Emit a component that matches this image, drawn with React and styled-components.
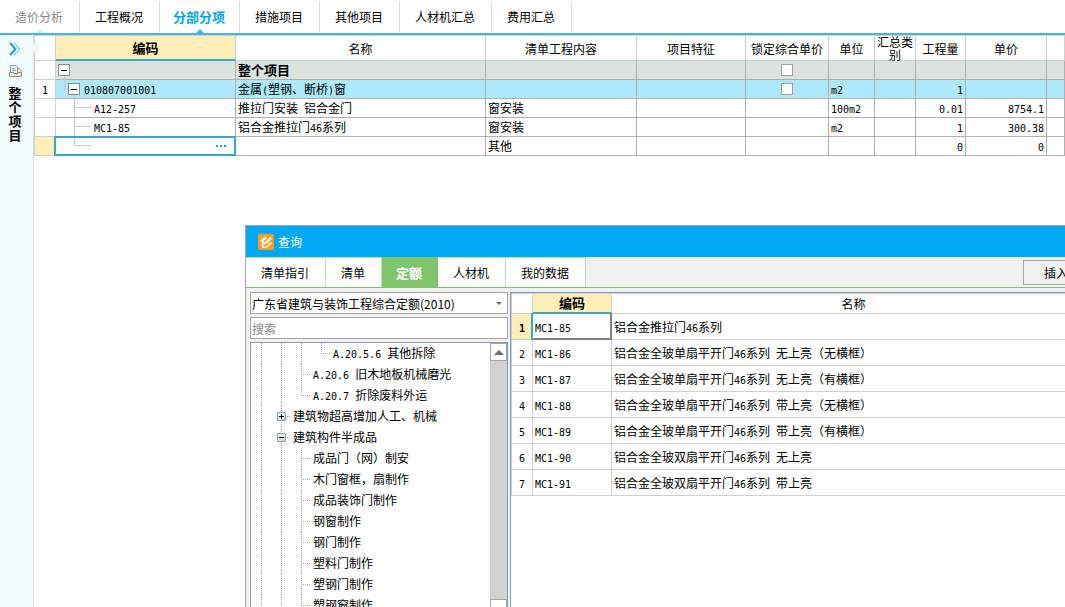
import React from "react";
import styled, { createGlobalStyle, css } from "styled-components";

const tabs = ["造价分析", "工程概况", "分部分项", "措施项目", "其他项目", "人材机汇总", "费用汇总"];

const columns = [
  { label: "编码", width: 180, current: true },
  { label: "名称", width: 250 },
  { label: "清单工程内容", width: 151 },
  { label: "项目特征", width: 109 },
  { label: "锁定综合单价", width: 83 },
  { label: "单位", width: 46 },
  { label: "汇总类别", width: 41 },
  { label: "工程量", width: 50 },
  { label: "单价", width: 81 },
  { label: "" },
];

const items = [
  { kind: "root", name: "整个项目", lock: true },
  { kind: "item", no: "1", code: "010807001001", name: "金属(塑钢、断桥)窗", lock: true, unit: "m2", qty: "1" },
  { kind: "leaf", code: "A12-257", name: "推拉门安装 铝合金门", work: "窗安装", unit: "100m2", qty: "0.01", price: "8754.1" },
  { kind: "leaf", code: "MC1-85", name: "铝合金推拉门46系列", work: "窗安装", unit: "m2", qty: "1", price: "300.38" },
  { kind: "new", work: "其他", qty: "0", price: "0" },
];

const dialogTabs = ["清单指引", "清单", "定额", "人材机", "我的数据"];

const treeRows = [
  { guides: ["line", "line", "line", "end"], label: "A.20.5.6 其他拆除" },
  { guides: ["line", "line", "tee"], label: "A.20.6 旧木地板机械磨光" },
  { guides: ["line", "line", "end"], label: "A.20.7 折除废料外运" },
  { guides: ["line", "tee"], toggle: "plus", label: "建筑物超高增加人工、机械" },
  { guides: ["line", "tee"], toggle: "minus", label: "建筑构件半成品" },
  { guides: ["line", "line", "tee"], label: "成品门（网）制安" },
  { guides: ["line", "line", "tee"], label: "木门窗框，扇制作" },
  { guides: ["line", "line", "tee"], label: "成品装饰门制作" },
  { guides: ["line", "line", "tee"], label: "钢窗制作" },
  { guides: ["line", "line", "tee"], label: "钢门制作" },
  { guides: ["line", "line", "tee"], label: "塑料门制作" },
  { guides: ["line", "line", "tee"], label: "塑钢门制作" },
  { guides: ["line", "line", "tee"], label: "塑钢窗制作" },
];

const quotas = [
  ["MC1-85", "铝合金推拉门46系列"],
  ["MC1-86", "铝合金全玻单扇平开门46系列 无上亮（无横框）"],
  ["MC1-87", "铝合金全玻单扇平开门46系列 无上亮（有横框）"],
  ["MC1-88", "铝合金全玻单扇平开门46系列 带上亮（无横框）"],
  ["MC1-89", "铝合金全玻单扇平开门46系列 带上亮（有横框）"],
  ["MC1-90", "铝合金全玻双扇平开门46系列 无上亮"],
  ["MC1-91", "铝合金全玻双扇平开门46系列 带上亮"],
];

// Latin runs use a half-width mono face beside the full-width characters
const Text = ({ children = "" }) =>
  children
    .split(/([ -~]+)/)
    .filter(Boolean)
    .map((part, i) => (/^[ -~]/.test(part) ? <Latin key={i}>{part}</Latin> : part));

const ItemCode = ({ item }) => {
  if (item.kind === "root") {
    return (
      <CodeCell>
        <Toggle $level={0} aria-label="折叠整个项目" />
      </CodeCell>
    );
  }
  if (item.kind === "item") {
    return (
      <CodeCell>
        <Branch $short $last />
        <Toggle $level={1} aria-label="折叠清单" />
        <Code $gap={4}><Text>{item.code}</Text></Code>
      </CodeCell>
    );
  }
  return (
    <CodeCell>
      <Branch $last={item.kind === "new"} />
      <Code $gap={3}><Text>{item.code}</Text></Code>
      {item.kind === "new" && (
        <MoreButton aria-label="选择编码">
          <i /><i /><i />
        </MoreButton>
      )}
    </CodeCell>
  );
};

const App = () => {
  return (
    <Page>
      <GlobalStyle />
      <TabBar>
        {tabs.map((tab, i) => (
          <Tab key={tab} $active={i === 2} $muted={i === 0}>{tab}</Tab>
        ))}
      </TabBar>

      <Workspace>
        <Sidebar>
          <IconButton aria-label="展开">
            <svg width="12" height="14" viewBox="0 0 12 14" fill="none" strokeWidth="1.5">
              <path d="M5 1l5.5 6L5 13" stroke="#8fd3ee" />
              <path d="M1 1l5.5 6L1 13" stroke="#1f9fd0" strokeWidth="2" />
            </svg>
          </IconButton>
          <IconButton aria-label="整个项目">
            <svg width="13" height="12" viewBox="0 0 13 12">
              <path d="M7.5 3.5h3l1.500 1.500v4h-4.500z" fill="#fff" stroke="#8c959a" />
              <path d="M1.500 8.500v-8h5l2 2v6z" fill="#fff" stroke="#8c959a" />
              <path d="M3 3.500h3M3 5.500h4" stroke="#3aa6d0" />
              <path d="M.5 7.500h4l1 1.500h3V7.500h4v4H.5z" fill="#fff3c4" stroke="#8c8c84" />
            </svg>
          </IconButton>
          <SideTitle>整个项目</SideTitle>
          <Notch width="6" height="12" viewBox="0 0 6 12">
            <path d="M0 0l5 6-5 6z" fill="#f0fcff" />
            <path d="M0 0l5 6-5 6" fill="none" stroke="#d3dfe2" />
          </Notch>
        </Sidebar>

        <Main>
          <ItemTable>
            <colgroup>
              <Col $width={21} />
              {columns.map((col, i) => <Col key={i} $width={col.width} />)}
            </colgroup>
            <thead>
              <tr>
                <HeadCell />
                {columns.map((col, i) => (
                  <HeadCell key={i} $current={col.current}>
                    <HeadLabel>{col.label}</HeadLabel>
                  </HeadCell>
                ))}
              </tr>
            </thead>
            <tbody>
              {items.map((item, i) => (
                <ItemRow key={i} $kind={item.kind}>
                  <IndexCell $current={item.kind === "new"}><Text>{item.no}</Text></IndexCell>
                  <Cell $flush $focused={item.kind === "new"}><ItemCode item={item} /></Cell>
                  <Cell $bold={item.kind === "root"}><Text>{item.name}</Text></Cell>
                  <Cell>{item.work}</Cell>
                  <Cell />
                  <Cell $align="center">
                    {item.lock && <Check type="checkbox" aria-label="锁定综合单价" />}
                  </Cell>
                  <Cell><Text>{item.unit}</Text></Cell>
                  <Cell />
                  <Cell $align="right"><Text>{item.qty}</Text></Cell>
                  <Cell $align="right"><Text>{item.price}</Text></Cell>
                  <Cell />
                </ItemRow>
              ))}
            </tbody>
          </ItemTable>
        </Main>
      </Workspace>

      <Dialog role="dialog" aria-label="查询">
        <TitleBar>
          <svg width="16" height="16" viewBox="0 0 16 16">
            <rect width="16" height="16" rx="2" fill="#ff9d1e" />
            <path d="M2 6.500L7.500 2.500l1.500 1.500L5.500 7l1 1.500L12 3l2 1.500L8.500 10l-2.500.5z" fill="#fff" />
            <path d="M4 9.500l1 3.500 3.500.5 5-5" fill="none" stroke="#fff" strokeWidth="1.600" />
          </svg>
          查询
        </TitleBar>
        <DialogTabs>
          {dialogTabs.map((tab) => (
            <DialogTab key={tab} $active={tab === "定额"}>{tab}</DialogTab>
          ))}
          <InsertButton>插入</InsertButton>
        </DialogTabs>

        <DialogBody>
          <LeftPanel>
            <SelectBox>
              <select aria-label="定额库">
                <option>广东省建筑与装饰工程综合定额(2010)</option>
              </select>
              <svg width="6" height="3" viewBox="0 0 6 3">
                <path d="M0 0h6L3 3z" fill="#666c78" />
              </svg>
            </SelectBox>
            <Search type="text" placeholder="搜索" aria-label="搜索" />
            <TreeBox>
              <Tree>
                {treeRows.map((row) => (
                  <TreeRow key={row.label}>
                    {row.guides.map((guide, i) => (
                      <Guide key={i} $kind={guide}>
                        {row.toggle && i === row.guides.length - 1 && (
                          <TreeToggle $plus={row.toggle === "plus"} aria-label={row.label} />
                        )}
                      </Guide>
                    ))}
                    <TreeLabel><Text>{row.label}</Text></TreeLabel>
                  </TreeRow>
                ))}
              </Tree>
              <ScrollBar>
                <ScrollButton aria-label="向上滚动">
                  <svg width="10" height="5" viewBox="0 0 10 5">
                    <path d="M0 5h10L5 0z" fill="#666c78" />
                  </svg>
                </ScrollButton>
                <Thumb />
              </ScrollBar>
            </TreeBox>
          </LeftPanel>

          <QuotaPanel>
            <ItemTable>
              <colgroup>
                <Col $width={21} />
                <Col $width={79} />
                <Col />
              </colgroup>
              <thead>
                <tr>
                  <QuotaHead />
                  <QuotaHead $current>编码</QuotaHead>
                  <QuotaHead>名称</QuotaHead>
                </tr>
              </thead>
              <tbody>
                {quotas.map(([code, name], i) => (
                  <tr key={code}>
                    <QuotaCell $align="center" $current={i === 0}><Text>{String(i + 1)}</Text></QuotaCell>
                    <QuotaCell $focused={i === 0}><Text>{code}</Text></QuotaCell>
                    <QuotaCell><Text>{name}</Text></QuotaCell>
                  </tr>
                ))}
              </tbody>
            </ItemTable>
          </QuotaPanel>
        </DialogBody>
      </Dialog>
    </Page>
  );
};

const GlobalStyle = createGlobalStyle`
  * { box-sizing: border-box; }
  body { margin: 0; }
  body, button, input, select {
    font-family: "Noto Sans CJK SC", sans-serif;
    font-size: 12px;
    color: #000;
  }
  button {
    border: none;
    padding: 0;
    background: none;
  }
  svg { display: block; }
`;

const Latin = styled.span`
  font-family: "DejaVu Sans Mono", monospace;
  font-size: 10px;
  line-height: 1;
  white-space: pre;
`;

const Page = styled.div`
  position: relative;
  display: flex;
  flex-direction: column;
  height: 100vh;
  overflow: hidden;
  background: #fff;
`;

const TabBar = styled.nav`
  display: flex;
  padding-top: 2px;
  border-bottom: 2px solid #43b7e6;
`;

const Tab = styled.button`
  position: relative;
  height: 31px;
  padding: 0 16px 2px 15px;
  border-right: 1px solid #dcdcdc;
  color: ${(p) => (p.$muted ? "#888" : "#000")};

  ${(p) => p.$active && css`
    padding: 0 14px 2px 13px;
    font-size: 13px;
    font-weight: 700;
    color: #00a5ee;
  `}

  ${(p) => (p.$active || p.$muted) && css`
    &::after {
      content: "";
      position: absolute;
      left: 36px;
      bottom: 0;
      border: 4px solid transparent;
      border-top: none;
      border-bottom-color: ${p.$active ? "#43b7e6" : "#cdeefa"};
    }
  `}
`;

const Workspace = styled.div`
  flex: 1;
  display: flex;
`;

const Sidebar = styled.aside`
  position: relative;
  flex: none;
  display: flex;
  flex-direction: column;
  align-items: center;
  gap: 9px;
  width: 34px;
  padding: 7px 3px 0 0;
  border-right: 1px solid #d3e3e6;
  background: #f0fcff;
`;

const IconButton = styled.button`
  display: block;
`;

const SideTitle = styled.div`
  width: 13px;
  font-size: 13px;
  line-height: 14px;
  font-weight: 700;
`;

const Notch = styled.svg`
  position: absolute;
  top: 7px;
  right: -6px;
  z-index: 1;
`;

const Main = styled.main`
  flex: 1;
  min-width: 0;
  border-top: 1px solid #d0d0d0;
`;

const ItemTable = styled.table`
  width: 100%;
  table-layout: fixed;
  border-collapse: separate;
  border-spacing: 0;
  border-left: 1px solid #d0d0d0;
`;

const Col = styled.col`
  width: ${(p) => (p.$width ? `${p.$width}px` : "auto")};
`;

const HeadCell = styled.th`
  height: 25px;
  padding: 0 2px;
  border-right: 1px solid #d0d0d0;
  border-bottom: 1px solid #d0d0d0;
  font-weight: 400;

  ${(p) => p.$current && css`
    background: #ffeeb5;
    border-bottom: 2px solid #3aa6d0;
    font-size: 13px;
    font-weight: 700;
  `}
`;

const HeadLabel = styled.div`
  display: flex;
  align-items: center;
  justify-content: center;
  height: 22px;
  line-height: 13px;
`;

const Cell = styled.td`
  position: relative;
  height: 19px;
  padding: ${(p) => (p.$flush ? "0" : "0 2px")};
  border-right: 1px solid #b0b0b0;
  border-bottom: 1px solid #b0b0b0;
  line-height: 14px;
  white-space: nowrap;
  text-align: ${(p) => p.$align || "left"};

  ${(p) => p.$bold && css`
    font-size: 13px;
    font-weight: 700;
  `}

  ${(p) => p.$focused && css`
    &::after {
      content: "";
      position: absolute;
      inset: -1px -1px -1px -2px;
      border: 2px solid #3aa6d0;
      pointer-events: none;
    }
  `}
`;

const IndexCell = styled(Cell)`
  && {
    border-color: #d0d0d0;
    text-align: center;
    background: ${(p) => (p.$current ? "#ffeeb5" : "#fff")};
  }
`;

const ItemRow = styled.tr`
  background: ${(p) => ({ root: "#dae3de", item: "#aee8fb" }[p.$kind] || "#fff")};
`;

const CodeCell = styled.div`
  display: flex;
  align-items: center;
  height: 18px;
`;

const Toggle = styled.button`
  position: relative;
  width: 12px;
  height: 12px;
  margin-left: ${(p) => (p.$level === 0 ? "2px" : "0")};
  border: 1px solid #8c8c8c;
  background: linear-gradient(#000, #000) center / 6px 1px no-repeat #fff;

  &::after {
    content: "";
    position: absolute;
    left: 5px;
    top: 11px;
    height: 4px;
    border-left: 1px solid #c8c8c8;
  }
`;

const Branch = styled.span`
  position: relative;
  align-self: stretch;
  width: ${(p) => (p.$short ? "4px" : "17px")};
  margin-left: ${(p) => (p.$short ? "8px" : "18px")};

  &::before {
    content: "";
    position: absolute;
    top: 0;
    left: 0;
    height: ${(p) => (p.$last ? "9px" : "19px")};
    border-left: 1px solid #c8c8c8;
  }

  &::after {
    content: "";
    position: absolute;
    top: 8px;
    left: 0;
    right: 0;
    border-top: 1px solid #c8c8c8;
  }
`;

const Code = styled.span`
  flex: 1;
  margin-left: ${(p) => p.$gap}px;
`;

const MoreButton = styled.button`
  display: flex;
  gap: 2px;
  margin-right: 9px;

  i {
    width: 2px;
    height: 2px;
    background: #2f8fd0;
  }
`;

const Check = styled.input`
  display: block;
  appearance: none;
  width: 12px;
  height: 12px;
  margin: 0 auto;
  border: 1px solid #a0a0a0;
  background: #fff;
`;

const Dialog = styled.section`
  position: absolute;
  top: 225px;
  left: 245px;
  right: -37px;
  bottom: -17px;
  display: flex;
  flex-direction: column;
  border: 1px solid #a5a5a5;
  background: #f1f1f1;
`;

const TitleBar = styled.header`
  display: flex;
  align-items: center;
  gap: 4px;
  height: 31px;
  padding-left: 12px;
  color: #fff;
  background: #00a8f3;
`;

const DialogTabs = styled.div`
  display: flex;
  height: 31px;
  border-bottom: 1px solid #7fc36f;
`;

const DialogTab = styled.button`
  padding: 0 16px 0 15px;
  border-top: 1px solid #b5e6a5;
  border-right: 1px solid #b5e6a5;
  background: #fff;

  ${(p) => p.$active && css`
    padding: 0 15px 0 14px;
    border-color: #80c46c;
    background: #80c46c;
    font-size: 13px;
    font-weight: 700;
    color: #fff;
  `}
`;

const InsertButton = styled.button`
  align-self: center;
  height: 25px;
  margin-left: auto;
  margin-right: 12px;
  padding: 0 20px;
  border: 1px solid #a5a5a5;
`;

const DialogBody = styled.div`
  flex: 1;
  min-height: 0;
  display: flex;
  gap: 2px;
  padding: 4px 4px 0;
`;

const LeftPanel = styled.div`
  flex: none;
  display: flex;
  flex-direction: column;
  gap: 3px;
  width: 258px;
`;

const SelectBox = styled.div`
  flex: none;
  position: relative;
  height: 22px;
  border: 1px solid #a5a5a5;
  background: #fff;

  select {
    appearance: none;
    display: block;
    width: 100%;
    height: 20px;
    padding: 0 1px;
    border: none;
    background: none;
  }

  svg {
    position: absolute;
    right: 5px;
    top: 9px;
    pointer-events: none;
  }
`;

const Search = styled.input`
  flex: none;
  height: 22px;
  padding: 0 1px;
  border: 1px solid #a5a5a5;
  background: #fff;

  &::placeholder { color: #888; }
`;

const TreeBox = styled.div`
  flex: 1;
  min-height: 0;
  display: flex;
  border: 1px solid #7f9db9;
  background: #fff;
`;

const Tree = styled.ul`
  flex: 1;
  margin: 0;
  padding: 0;
  overflow: hidden;
  list-style: none;
`;

const TreeRow = styled.li`
  display: flex;
  height: 21px;
`;

const Guide = styled.span`
  position: relative;
  width: 20px;

  &::before {
    content: "";
    position: absolute;
    top: 0;
    left: 10px;
    width: 1px;
    height: ${(p) => (p.$kind === "end" ? "11px" : "21px")};
    background: repeating-linear-gradient(#a8a898 0 1px, transparent 1px 2px);
  }

  ${(p) => p.$kind !== "line" && css`
    &::after {
      content: "";
      position: absolute;
      top: 10px;
      left: 10px;
      width: 10px;
      height: 1px;
      background: repeating-linear-gradient(90deg, #a8a898 0 1px, transparent 1px 2px);
    }
  `}
`;

const TreeToggle = styled.button`
  position: absolute;
  z-index: 1;
  top: 6px;
  left: 6px;
  width: 9px;
  height: 9px;
  border: 1px solid #7f9db9;
  border-radius: 1px;
  background:
    linear-gradient(#000, #000) center / 5px 1px no-repeat,
    linear-gradient(#000, #000) center / 1px ${(p) => (p.$plus ? "5px" : "1px")} no-repeat,
    linear-gradient(135deg, #fff, #d6d2c6);
`;

const TreeLabel = styled.span`
  margin-left: 2px;
  line-height: 20px;
  white-space: nowrap;
`;

const ScrollBar = styled.div`
  display: flex;
  flex-direction: column;
  justify-content: space-between;
  width: 17px;
  background: #d2d2d2;
`;

const ScrollButton = styled.button`
  display: flex;
  align-items: center;
  justify-content: center;
  height: 18px;
  border: 1px solid #a5a5a5;
  background: #fff;
`;

const Thumb = styled.div`
  height: 23px;
  border: 1px solid #a5a5a5;
  background: #fff;
`;

const QuotaPanel = styled.div`
  flex: 1;
  min-width: 0;
  border: 1px solid #7f9db9;
  background: #fff;
`;

const QuotaHead = styled(HeadCell)`
  height: 21px;
  border-top: 1px solid #d0d0d0;
  line-height: 18px;
`;

const QuotaCell = styled(Cell)`
  height: 26px;
  border-color: #d0d0d0;

  ${(p) => p.$current && css`
    background: #ffeeb5;
    font-weight: 700;
  `}

  ${(p) => p.$focused && css`
    &::after {
      border-color: #808080;
      border-top: none;
      border-left-color: #3aa6d0;
    }
  `}
`;

export default App;
